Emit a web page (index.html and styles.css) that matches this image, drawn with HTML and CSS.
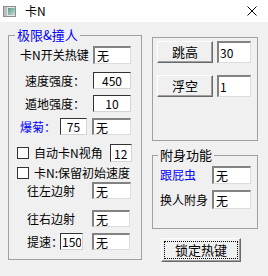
FILE: index.html
```html
<!DOCTYPE html>
<html lang="zh-CN">
<head>
    <meta charset="UTF-8">
    <meta name="viewport" content="width=device-width, initial-scale=1.0">
    <title>卡N</title>
    <link rel="stylesheet" href="styles.css">
</head>
<body>
    <div class="titlebar">
        <svg class="app-icon" viewBox="0 0 13 11">
            <defs>
                <linearGradient id="pic" x1="0" y1="0" x2="1" y2="1">
                    <stop offset="0" stop-color="#4f9c8a"/>
                    <stop offset="1" stop-color="#c9ddd6"/>
                </linearGradient>
            </defs>
            <rect x="0.5" y="0.5" width="12" height="10" fill="#e6e6e6" stroke="#8c8c8c"/>
            <rect x="1" y="1" width="3" height="9" fill="#bdbdbd"/>
            <rect x="5" y="2" width="7" height="7" fill="url(#pic)"/>
        </svg>
        <span class="title">卡N</span>
        <svg class="close" viewBox="0 0 10 10">
            <path d="M0.5 0.5 L9.5 9.5 M9.5 0.5 L0.5 9.5" stroke="#000" stroke-width="1" fill="none"/>
        </svg>
    </div>

    <div class="client">
        <fieldset class="group group-limit">
            <legend class="blue">极限&amp;撞人</legend>

            <div class="row row-hotkey">
                <label class="lbl-hotkey">卡N开关热键</label>
                <input class="field w38" value="无">
            </div>
            <div class="row row-speed">
                <label class="lbl-speed">速度强度：</label>
                <input class="num w38 center" value="450">
            </div>
            <div class="row row-dig">
                <label class="lbl-speed">遁地强度：</label>
                <input class="num w38 center" value="10">
            </div>
            <div class="row row-juhua">
                <label class="lbl-juhua blue">爆菊：</label>
                <input class="num w27 center" value="75">
                <input class="field w39 gap5" value="无">
            </div>
            <div class="row row-check1">
                <input type="checkbox" class="check">
                <label class="lbl-check lbl-angle">自动卡N视角</label>
                <input class="num w22 tall" value="12">
            </div>
            <div class="row row-check2">
                <input type="checkbox" class="check">
                <label class="lbl-check">卡N:保留初始速度</label>
            </div>
            <div class="row row-left">
                <label class="lbl-shoot">往左边射</label>
                <input class="field w39" value="无">
            </div>
            <div class="row row-right">
                <label class="lbl-shoot">往右边射</label>
                <input class="field w38" value="无">
            </div>
            <div class="row row-boost">
                <label class="lbl-boost">提速：</label>
                <input class="num w23" value="150">
                <input class="field w38 gap9" value="无">
            </div>
        </fieldset>

        <div class="side">
            <fieldset class="group group-jump">
                <div class="row row-btn first">
                    <button class="btn">跳高</button>
                    <input class="field w34 btn-field" value="30">
                </div>
                <div class="row row-btn second">
                    <button class="btn">浮空</button>
                    <input class="field w34 btn-field" value="1">
                </div>
            </fieldset>

            <fieldset class="group group-attach">
                <legend>附身功能</legend>
                <div class="row row-follow">
                    <label class="lbl-attach blue">跟屁虫</label>
                    <input class="field w39" value="无">
                </div>
                <div class="row row-swap">
                    <label class="lbl-attach">换人附身</label>
                    <input class="field w39 h19" value="无">
                </div>
            </fieldset>

            <button class="btn btn-lock"><span class="focus">锁定热键</span></button>
        </div>
    </div>
</body>
</html>
```

FILE: styles.css
```css
* {
    box-sizing: border-box;
    margin: 0;
    padding: 0;
}

body {
    font-family: "Noto Sans CJK SC", "Liberation Sans", sans-serif;
    font-size: 12px;
    color: #000;
    background: #f0f0f0;
    width: 268px;
    height: 276px;
    overflow: hidden;
}

.titlebar {
    height: 22px;
    background: #fff;
    display: flex;
    align-items: center;
    padding-left: 3px;
}
.app-icon {
    width: 13px;
    height: 11px;
}
.title {
    margin-left: 9px;
    line-height: 14px;
}
.close {
    width: 10px;
    height: 10px;
    margin-left: auto;
    margin-right: 11px;
}

.client {
    display: flex;
    align-items: flex-start;
    gap: 10px;
    padding-left: 8px;
}

.group {
    border: 1px solid #a0a0a0;
    padding: 0;
    min-width: 0;
}
.group legend {
    font-size: 13px;
    line-height: 14px;
    padding: 0 2px;
}
.blue {
    color: #00f;
}

.row {
    display: flex;
    align-items: center;
}
.row label {
    line-height: 14px;
    white-space: nowrap;
    flex-shrink: 0;
}

/* text boxes */
input {
    font: inherit;
    background: #fff;
    outline: none;
    flex-shrink: 0;
    height: 17px;
    padding: 0 2px;
}
.field {
    border-style: solid;
    border-width: 2px 1px 1px 2px;
    border-color: #828282 #dcdcdc #dcdcdc #828282;
}
.num {
    border-style: solid;
    border-width: 1px;
    border-color: #333 #d4d4d4 #d4d4d4 #333;
    padding: 0 1px;
}
.center {
    text-align: center;
}
.w22 { width: 22px; }
.w23 { width: 23px; }
.w27 { width: 27px; }
.w34 { width: 34px; }
.w38 { width: 38px; }
.w39 { width: 39px; }
.h19 { height: 19px; }
.tall { height: 18px; padding-left: 3px; }
.gap5 { margin-left: 5px; }
.gap9 { margin-left: 9px; }

/* left group */
.group-limit {
    width: 134px;
    margin-top: 6px;
    padding-bottom: 9px;
}
.group-limit legend {
    margin-left: 6px;
}
.row-hotkey {
    margin-top: 4px;
    padding-left: 11px;
    height: 18px;
}
.row-hotkey input {
    height: 18px;
}
.lbl-hotkey { width: 73px; }

.row-speed {
    margin-top: 8px;
    padding-left: 16px;
}
.row-dig {
    margin-top: 6px;
    padding-left: 16px;
}
.lbl-speed { width: 68px; }

.row-juhua {
    margin-top: 6px;
    padding-left: 11px;
}
.lbl-juhua { width: 40px; }

.check {
    appearance: none;
    width: 12px;
    height: 12px;
    border: 1px solid #333;
    background: #fff;
    flex-shrink: 0;
}
.lbl-check {
    margin-left: 5px;
}
.lbl-angle { width: 76px; }
.row-check1 {
    margin-top: 9px;
    padding-left: 8px;
    height: 18px;
}
.row-check2 {
    margin-top: 4px;
    padding-left: 8px;
    height: 13px;
}

.row-left {
    margin-top: 3px;
    padding-left: 18px;
}
.row-right {
    margin-top: 11px;
    padding-left: 18px;
}
.lbl-shoot { width: 65px; }

.row-boost {
    margin-top: 6px;
    padding-left: 18px;
}
.lbl-boost { width: 33px; }

/* right column */
.side {
    width: 106px;
    display: flex;
    flex-direction: column;
}
.group-jump {
    height: 104px;
    margin-top: 15px;
}
.row-btn {
    height: 22px;
    padding-left: 4px;
    align-items: flex-start;
}
.row-btn.first { margin-top: 3px; }
.row-btn.second { margin-top: 12px; }
.btn-field {
    height: 22px;
    margin-left: 4px;
    padding-left: 1px;
}

.btn {
    font: inherit;
    font-size: 13px;
    line-height: 14px;
    width: 56px;
    height: 22px;
    background: #f0f0f0;
    border-style: solid;
    border-width: 1px;
    border-color: #fff #696969 #696969 #fff;
    box-shadow: inset -1px -1px 0 #a0a0a0;
    flex-shrink: 0;
}

.group-attach {
    margin-top: 7px;
    padding-bottom: 19px;
}
.group-attach legend {
    margin-left: 5px;
}
.row-follow {
    margin-top: 4px;
    padding-left: 7px;
}
.row-follow input { height: 18px; }
.row-swap {
    margin-top: 6px;
    padding-left: 7px;
}
.lbl-attach { width: 52px; }

.btn-lock {
    width: 80px;
    height: 24px;
    margin-top: 9px;
    margin-left: 9px;
    padding: 2px;
}
.focus {
    display: flex;
    align-items: center;
    justify-content: center;
    height: 100%;
    border: 1px dotted #000;
}
```
